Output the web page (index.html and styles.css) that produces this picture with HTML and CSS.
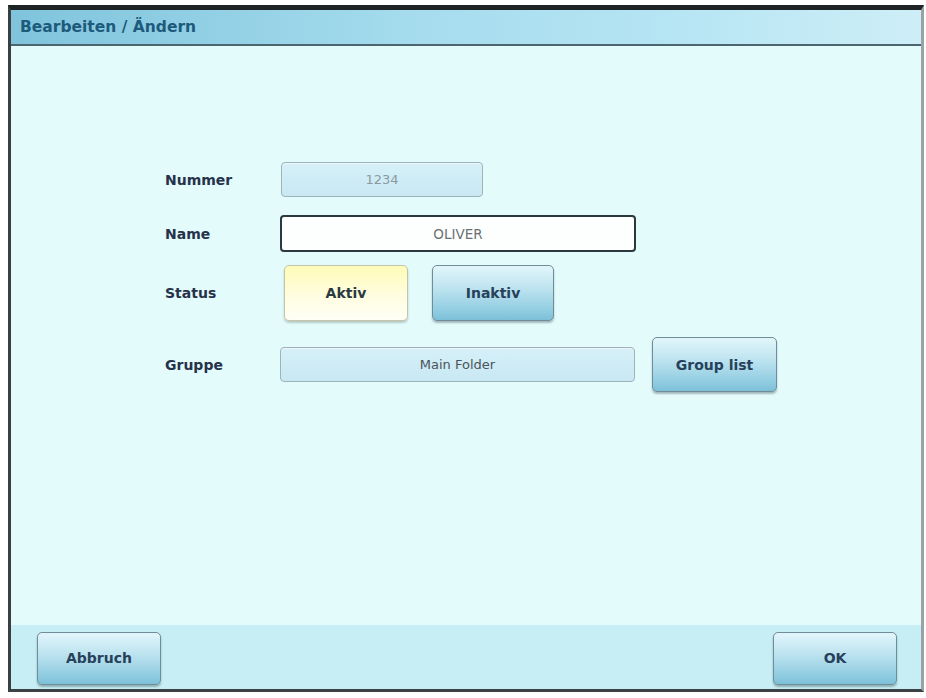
FILE: index.html
```html
<!DOCTYPE html>
<html lang="de">
<head>
  <meta charset="UTF-8">
  <title>Bearbeiten / Ändern</title>
  <link rel="stylesheet" href="styles.css">
</head>
<body>
  <div class="window">
    <div class="titlebar">Bearbeiten / Ändern</div>

    <div class="content">
      <div class="form">
        <div class="row row-nummer">
          <div class="label">Nummer</div>
          <div class="field field-readonly field-nummer">1234</div>
        </div>

        <div class="row row-name">
          <div class="label">Name</div>
          <div class="field field-edit">OLIVER</div>
        </div>

        <div class="row row-status">
          <div class="label">Status</div>
          <button class="btn btn-selected btn-aktiv">Aktiv</button>
          <button class="btn">Inaktiv</button>
        </div>

        <div class="row row-gruppe">
          <div class="label">Gruppe</div>
          <div class="field field-readonly field-gruppe">Main Folder</div>
          <button class="btn">Group list</button>
        </div>
      </div>
    </div>

    <div class="footer">
      <button class="btn btn-footer">Abbruch</button>
      <button class="btn btn-footer">OK</button>
    </div>
  </div>
</body>
</html>
```

FILE: styles.css
```css
body {
  margin: 0;
  background: #ffffff;
  font-family: 'DejaVu Sans', 'Liberation Sans', sans-serif;
}

.window {
  margin: 5px 2px 0 8px;
  height: 687px;
  display: flex;
  flex-direction: column;
  border-top: 5px solid #1e2426;
  border-left: 3px solid #3a3f42;
  border-right: 3px solid #9aa2a6;
  border-bottom: 3px solid #3c4244;
  box-sizing: border-box;
  background: #e4fbfc;
}

.titlebar {
  height: 34px;
  line-height: 35px;
  padding-left: 9px;
  font-size: 15.5px;
  font-weight: bold;
  color: #1d5a7c;
  background: linear-gradient(to right, #7fc4dc 0%, #a6dcee 45%, #b4e4f3 70%, #cdeef7 100%);
  border-bottom: 2px solid #4c6670;
}

.content {
  flex: 1;
  padding: 116px 0 0 154px;
  background: #e4fbfc;
}

.form {
  display: flex;
  flex-direction: column;
}

.row {
  display: flex;
  align-items: center;
}

.label {
  width: 115px;
  font-size: 14px;
  font-weight: bold;
  color: #26324a;
}

.row-nummer { height: 35px; }
.row-name { height: 37px; margin-top: 18px; }
.row-status { height: 56px; margin-top: 13px; }
.row-gruppe { height: 55px; margin-top: 16px; }

.field {
  box-sizing: border-box;
  display: flex;
  align-items: center;
  justify-content: center;
  border-radius: 4px;
  font-size: 13px;
  color: #6a7478;
}

.field-readonly {
  background: linear-gradient(to bottom, #d6f0f8, #c8e8f3);
  border: 1px solid #9eb2b8;
  box-shadow: inset 0 1px 1px rgba(255, 255, 255, 0.6);
}

.field-nummer {
  width: 202px;
  height: 35px;
  margin-left: 1px;
  color: #8a9aa0;
}

.field-edit {
  width: 356px;
  height: 37px;
  background: #fdffff;
  border: 2px solid #2b383e;
  font-size: 13.5px;
  color: #6b7072;
}

.field-gruppe {
  width: 355px;
  height: 35px;
  color: #4a5458;
  font-size: 13px;
}

.btn {
  box-sizing: border-box;
  width: 122px;
  height: 56px;
  border: 1px solid #6f8c98;
  border-radius: 5px;
  background: linear-gradient(to bottom, #e2f6fb 0%, #bfe4f0 40%, #8ecbe0 85%, #7cc0d8 100%);
  box-shadow: 0 2px 2px rgba(40, 60, 70, 0.35);
  font-family: inherit;
  font-size: 14px;
  font-weight: bold;
  color: #27415a;
  cursor: pointer;
}

.btn-selected {
  background: linear-gradient(to bottom, #fffbb8 0%, #fffde0 55%, #fffff6 100%);
  border-color: #c4c4a8;
  box-shadow: 0 2px 2px rgba(60, 60, 40, 0.25);
  color: #2a3a40;
}

.btn-aktiv {
  width: 124px;
  margin-left: 4px;
  margin-right: 24px;
}

.row-gruppe .btn {
  width: 125px;
  height: 55px;
  margin-left: 17px;
}

.footer {
  height: 64px;
  display: flex;
  align-items: center;
  justify-content: space-between;
  padding: 0 24px 0 26px;
  background: #c6eef4;
}

.btn-footer {
  width: 124px;
  height: 53px;
  margin-top: 2px;
}
```
